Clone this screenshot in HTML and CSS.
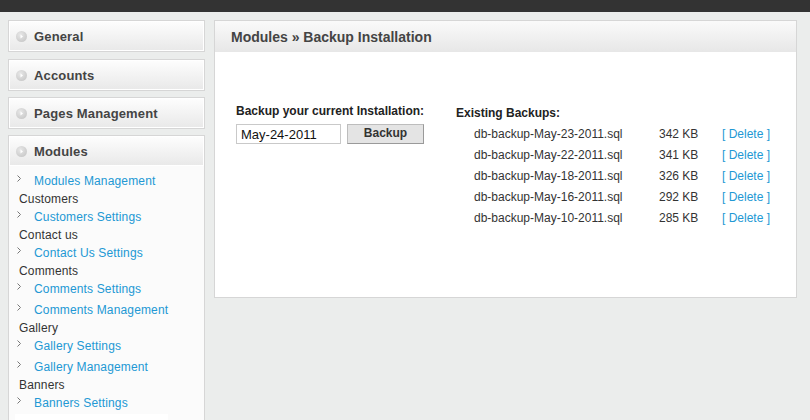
FILE: index.html
```html
<!DOCTYPE html>
<html>
<head>
<meta charset="utf-8">
<link rel="stylesheet" href="styles.css">
</head>
<body>
<div class="topbar"></div>
<div class="layout">
  <aside class="sidebar">
    <div class="box"><div class="box-head"><span class="bullet"><svg width="11" height="11" viewBox="0 0 11 11"><path d="M4.5 3.5 L7 5.5 L4.5 7.5 Z" fill="#fff"/></svg></span>General</div></div>
    <div class="box box-second"><div class="box-head"><span class="bullet"><svg width="11" height="11" viewBox="0 0 11 11"><path d="M4.5 3.5 L7 5.5 L4.5 7.5 Z" fill="#fff"/></svg></span>Accounts</div></div>
    <div class="box"><div class="box-head"><span class="bullet"><svg width="11" height="11" viewBox="0 0 11 11"><path d="M4.5 3.5 L7 5.5 L4.5 7.5 Z" fill="#fff"/></svg></span>Pages Management</div></div>
    <div class="box box-open">
      <div class="box-head"><span class="bullet"><svg width="11" height="11" viewBox="0 0 11 11"><path d="M4.5 3.5 L7 5.5 L4.5 7.5 Z" fill="#fff"/></svg></span>Modules</div>
      <div class="menu">
        <ul class="links">
          <li><span class="arr"><svg width="5" height="7" viewBox="0 0 5 7"><polyline points="0.5,0.5 3.5,3.5 0.5,6.5" fill="none" stroke="#777" stroke-width="1"/></svg></span><a href="#">Modules Management</a></li>
        </ul>
        <div class="cat">Customers</div>
        <ul class="links">
          <li><span class="arr"><svg width="5" height="7" viewBox="0 0 5 7"><polyline points="0.5,0.5 3.5,3.5 0.5,6.5" fill="none" stroke="#777" stroke-width="1"/></svg></span><a href="#">Customers Settings</a></li>
        </ul>
        <div class="cat">Contact us</div>
        <ul class="links">
          <li><span class="arr"><svg width="5" height="7" viewBox="0 0 5 7"><polyline points="0.5,0.5 3.5,3.5 0.5,6.5" fill="none" stroke="#777" stroke-width="1"/></svg></span><a href="#">Contact Us Settings</a></li>
        </ul>
        <div class="cat">Comments</div>
        <ul class="links">
          <li><span class="arr"><svg width="5" height="7" viewBox="0 0 5 7"><polyline points="0.5,0.5 3.5,3.5 0.5,6.5" fill="none" stroke="#777" stroke-width="1"/></svg></span><a href="#">Comments Settings</a></li>
          <li><span class="arr"><svg width="5" height="7" viewBox="0 0 5 7"><polyline points="0.5,0.5 3.5,3.5 0.5,6.5" fill="none" stroke="#777" stroke-width="1"/></svg></span><a href="#">Comments Management</a></li>
        </ul>
        <div class="cat">Gallery</div>
        <ul class="links">
          <li><span class="arr"><svg width="5" height="7" viewBox="0 0 5 7"><polyline points="0.5,0.5 3.5,3.5 0.5,6.5" fill="none" stroke="#777" stroke-width="1"/></svg></span><a href="#">Gallery Settings</a></li>
          <li><span class="arr"><svg width="5" height="7" viewBox="0 0 5 7"><polyline points="0.5,0.5 3.5,3.5 0.5,6.5" fill="none" stroke="#777" stroke-width="1"/></svg></span><a href="#">Gallery Management</a></li>
        </ul>
        <div class="cat">Banners</div>
        <ul class="links">
          <li><span class="arr"><svg width="5" height="7" viewBox="0 0 5 7"><polyline points="0.5,0.5 3.5,3.5 0.5,6.5" fill="none" stroke="#777" stroke-width="1"/></svg></span><a href="#">Banners Settings</a></li>
        </ul>
        <div class="menu-foot"></div>
      </div>
    </div>
  </aside>
  <main class="panel">
    <div class="panel-head">Modules » Backup Installation</div>
    <div class="panel-body">
      <div class="col-left">
        <div class="label">Backup your current Installation:</div>
        <form class="backup-form">
          <input class="date-input" type="text" value="May-24-2011">
          <button class="btn" type="button">Backup</button>
        </form>
      </div>
      <div class="col-right">
        <div class="label">Existing Backups:</div>
        <div class="rows">
          <div class="row"><span class="fname">db-backup-May-23-2011.sql</span><span class="fsize">342 KB</span><a href="#" class="del">[ Delete ]</a></div>
          <div class="row"><span class="fname">db-backup-May-22-2011.sql</span><span class="fsize">341 KB</span><a href="#" class="del">[ Delete ]</a></div>
          <div class="row"><span class="fname">db-backup-May-18-2011.sql</span><span class="fsize">326 KB</span><a href="#" class="del">[ Delete ]</a></div>
          <div class="row"><span class="fname">db-backup-May-16-2011.sql</span><span class="fsize">292 KB</span><a href="#" class="del">[ Delete ]</a></div>
          <div class="row"><span class="fname">db-backup-May-10-2011.sql</span><span class="fsize">285 KB</span><a href="#" class="del">[ Delete ]</a></div>
        </div>
      </div>
    </div>
  </main>
</div>
</body>
</html>
```

FILE: styles.css
```css
* { box-sizing: border-box; }
html, body { margin: 0; padding: 0; }
body {
  background: #ebedec;
  font-family: "Liberation Sans", Arial, sans-serif;
  font-size: 12px;
  color: #333;
  height: 420px;
  overflow: hidden;
}
.topbar {
  height: 12px;
  background: #333333;
}
.layout {
  display: flex;
  align-items: flex-start;
  gap: 9px;
  padding: 8px 13px 0 8px;
}
.sidebar {
  width: 197px;
  flex: none;
  display: flex;
  flex-direction: column;
  gap: 6px;
}
.box {
  border: 1px solid #d6d6d6;
  background: #fbfbfb;
}
.box-second { margin-top: 1px; }
.box-head {
  height: 30px;
  display: flex;
  align-items: center;
  padding-left: 6px;
  border: 1px solid #fff;
  background: linear-gradient(#fdfdfd, #e9e9e9);
  font-weight: bold;
  font-size: 13px;
  color: #444;
  letter-spacing: 0.15px;
}
.bullet {
  width: 11px;
  height: 11px;
  border-radius: 50%;
  background: radial-gradient(circle at 40% 35%, #e8e8e8 0%, #d2d2d2 55%, #c2c2c2 100%);
  margin-right: 7px;
  display: flex;
}
.menu {
  padding-top: 6px;
  height: 260px;
}
.links {
  list-style: none;
  margin: 0;
  padding: 0;
  display: flex;
  flex-direction: column;
  gap: 3px;
}
.links li {
  display: flex;
  line-height: 18px;
  padding-left: 8px;
  letter-spacing: 0.15px;
}
.arr {
  width: 17px;
  flex: none;
  display: flex;
  align-items: flex-start;
  padding-top: 3px;
}
.arr svg { display: block; }
.links a {
  color: #2298d4;
  text-decoration: none;
}
.cat {
  line-height: 18px;
  padding-left: 10px;
  color: #333;
  letter-spacing: 0.15px;
}
.menu-foot {
  margin-top: 2px;
  margin-left: 6px;
  width: 153px;
  height: 12px;
  background: #fff;
}
.panel {
  width: 583px;
  flex: none;
  border: 1px solid #d6d6d6;
  background: #fff;
}
.panel-head {
  height: 31px;
  padding-left: 16px;
  display: flex;
  align-items: center;
  background: linear-gradient(#fafafa, #e7e7e7);
  font-weight: bold;
  font-size: 14px;
  color: #444;
}
.panel-body {
  display: flex;
  height: 245px;
  padding: 52px 0 0 21px;
}
.col-left {
  width: 220px;
  flex: none;
}
.label {
  font-weight: bold;
  font-size: 12px;
  line-height: 14px;
  color: #222;
}
.backup-form {
  margin: 6px 0 0 0;
  display: flex;
  gap: 6px;
}
.date-input {
  width: 105px;
  height: 20px;
  border: 1px solid #c9c9c9;
  padding: 1px 4px 0 4px;
  font-family: "Liberation Sans", Arial, sans-serif;
  font-size: 13px;
  color: #111;
  outline: none;
}
.btn {
  width: 77px;
  height: 20px;
  border: 1px solid #bdbdbd;
  border-right-color: #9a9a9a;
  border-bottom-color: #9a9a9a;
  background: #e4e4e4;
  font-family: "Liberation Sans", Arial, sans-serif;
  font-weight: bold;
  font-size: 12px;
  color: #333;
  padding: 0 0 2px 0;
}
.col-right {
  padding-top: 2px;
}
.rows {
  margin-top: 4px;
  padding-left: 18px;
}
.row {
  display: flex;
  line-height: 21px;
}
.fname { width: 185px; color: #333; }
.fsize { width: 63px; color: #333; }
.del { color: #2298d4; text-decoration: none; }
```
